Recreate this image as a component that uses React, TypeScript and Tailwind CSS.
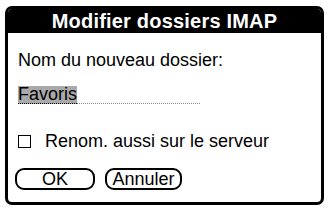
export default function App() {
  return (
    <div className="w-[329px] h-[212px] bg-white pt-[6px] pl-[5px] font-['Liberation_Sans',Arial,sans-serif] text-black">
      <div className="w-[319px] h-[199px] border-[3px] border-black rounded-[7px] flex flex-col overflow-hidden">
        {/* Title bar */}
        <div className="h-[24px] bg-black text-white font-bold text-[20px] leading-[24px] text-center tracking-[0.2px]">
          Modifier dossiers IMAP
        </div>

        <div className="flex flex-col pl-[10px]">
          <div className="mt-[16px] text-[18px] leading-[22px]">Nom du nouveau dossier:</div>

          <div className="mt-[15px] w-[182px] h-[18px] border-b border-dotted border-[#8a8a8a] flex items-start">
            <span className="h-[18px] leading-[17px] text-[18px] bg-[#a9a9a9] border-b border-dotted border-black">
              Favoris
            </span>
          </div>

          <div className="mt-[26px] flex items-center">
            <span className="w-[13px] h-[13px] border-[1.5px] border-black" />
            <span className="ml-[14px] text-[18px] leading-[22px]">Renom. aussi sur le serveur</span>
          </div>

          <div className="mt-[16px] -ml-[3px] flex items-center gap-[10px]">
            <button className="w-[80px] h-[22px] border-2 border-black rounded-[9px] text-[18px] leading-[18px] flex items-center justify-center">
              OK
            </button>
            <button className="w-[77px] h-[22px] border-2 border-black rounded-[9px] text-[18px] leading-[18px] flex items-center justify-center">
              Annuler
            </button>
          </div>
        </div>
      </div>
    </div>
  );
}
